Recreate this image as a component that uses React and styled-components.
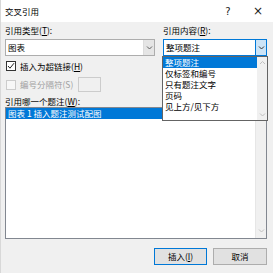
import React from "react";
import styled, { createGlobalStyle } from "styled-components";

const Global = createGlobalStyle`
  html, body { margin: 0; padding: 0; background: #f0f0f0; }
  body { font-family: "Noto Sans CJK SC", "Noto Sans", sans-serif; font-size: 8.5px; color: #000; }
`;

const Dialog = styled.div`
  width: 273px;
  height: 273px;
  background: #f0f0f0;
  display: flex;
  flex-direction: column;
  box-sizing: border-box;
  border-left: 1px solid #d8d8d8;
  overflow: hidden;
`;

const TitleBar = styled.div`
  height: 22px;
  background: #fff;
  display: flex;
  align-items: center;
  padding-left: 4px;
  line-height: 11px;
`;

const TitleText = styled.span`
  flex: 1;
`;

const TitleButton = styled.span`
  width: ${(p) => p.$w}px;
  text-align: center;
  font-family: "DejaVu Sans", sans-serif;
  font-size: ${(p) => p.$size}px;
  color: #222;
`;

const Body = styled.div`
  flex: 1;
  display: flex;
  flex-direction: column;
  padding: 3px 6px 0 4px;
`;

const TopRow = styled.div`
  display: grid;
  grid-template-columns: 150px 104px;
  column-gap: 8px;
`;

const Field = styled.div`
  position: relative;
  display: flex;
  flex-direction: column;
`;

const Label = styled.div`
  height: 11px;
  line-height: 11px;
  white-space: nowrap;
  width: ${(p) => (p.$w ? `${p.$w}px` : "auto")};
  color: ${(p) => (p.$disabled ? "#a0a0a0" : "#000")};
`;

const U = styled.span`
  text-decoration: underline;
`;

const Combo = styled.div`
  margin-top: 3px;
  height: 17px;
  box-sizing: border-box;
  border: 1px solid ${(p) => (p.$focus ? "#0078d7" : "#adadad")};
  background: #fff;
  display: flex;
  align-items: stretch;
`;

const ComboValue = styled.div`
  flex: 1;
  line-height: 15px;
  padding-left: 2px;
  white-space: nowrap;
`;

const ComboButton = styled.div`
  width: 10px;
  display: flex;
  align-items: center;
  justify-content: center;
  background: ${(p) => (p.$focus ? "#cce4f7" : "#e5e5e5")};
  border-left: 1px solid ${(p) => (p.$focus ? "#0078d7" : "#dcdcdc")};
`;

const Chevron = ({ color = "#606060", up }) => (
  <svg width="7" height="5" viewBox="0 0 7 5">
    <path
      d={up ? "M1 4 L3.5 1.5 L6 4" : "M1 1.5 L3.5 4 L6 1.5"}
      fill="none"
      stroke={color}
      strokeWidth="1"
    />
  </svg>
);

const DropList = styled.div`
  position: absolute;
  top: 100%;
  left: -1px;
  width: 106px;
  height: 65px;
  box-sizing: border-box;
  border: 1px solid #646464;
  background: #fff;
  display: flex;
  z-index: 5;
`;

const Items = styled.div`
  flex: 1;
  display: flex;
  flex-direction: column;
`;

const Item = styled.div`
  height: 11px;
  line-height: 11px;
  padding-left: 2px;
  white-space: nowrap;
  overflow: hidden;
  background: ${(p) => (p.$sel ? "#0078d7" : "transparent")};
  color: ${(p) => (p.$sel ? "#fff" : "#000")};
`;

const ScrollBar = styled.div`
  width: 10px;
  background: #f0f0f0;
  display: flex;
  flex-direction: column;
  justify-content: space-between;
  align-items: center;
  padding: 3px 0;
`;

const CheckRow = styled.div`
  margin-top: ${(p) => p.$mt}px;
  height: ${(p) => p.$h}px;
  display: flex;
  align-items: center;
`;

const Box = styled.div`
  width: 10px;
  height: 10px;
  box-sizing: border-box;
  border: 1px solid ${(p) => (p.$disabled ? "#cccccc" : "#333")};
  background: ${(p) => (p.$disabled ? "#f7f7f7" : "#fff")};
  display: flex;
  align-items: center;
  justify-content: center;
  margin-right: 4px;
  margin-left: 1px;
`;

const SmallInput = styled.div`
  width: 23px;
  height: 15px;
  box-sizing: border-box;
  border: 1px solid #cccccc;
  background: #f0f0f0;
`;

const BigList = styled.div`
  height: 132px;
  box-sizing: border-box;
  border: 1px solid #828790;
  background: #fff;
  display: flex;
`;

const BigItems = styled.div`
  flex: 1;
`;

const BigScroll = styled(ScrollBar)`
  justify-content: flex-end;
  border-left: 1px solid #e6e6e6;
  padding-bottom: 5px;
`;

const Buttons = styled.div`
  margin-top: 9px;
  display: flex;
  justify-content: flex-end;
  gap: 6px;
`;

const Button = styled.div`
  width: ${(p) => p.$w}px;
  height: 17px;
  box-sizing: border-box;
  border: 1px solid ${(p) => (p.$default ? "#0078d7" : "#adadad")};
  background: #e1e1e1;
  display: flex;
  align-items: center;
  justify-content: center;
  line-height: 11px;
`;

export default function App() {
  return (
    <>
      <Global />
      <Dialog>
        <TitleBar>
          <TitleText>交叉引用</TitleText>
          <TitleButton $w={30} $size={10}>?</TitleButton>
          <TitleButton $w={30} $size={12}>×</TitleButton>
        </TitleBar>
        <Body>
          <TopRow>
            <Field>
              <Label>
                引用类型(<U>T</U>):
              </Label>
              <Combo>
                <ComboValue>图表</ComboValue>
                <ComboButton>
                  <Chevron />
                </ComboButton>
              </Combo>
            </Field>
            <Field>
              <Label>
                引用内容(<U>R</U>):
              </Label>
              <Combo $focus>
                <ComboValue>整项题注</ComboValue>
                <ComboButton $focus>
                  <Chevron color="#333" />
                </ComboButton>
              </Combo>
              <DropList>
                <Items>
                  <Item $sel>整项题注</Item>
                  <Item>仅标签和编号</Item>
                  <Item>只有题注文字</Item>
                  <Item>页码</Item>
                  <Item>见上方/见下方</Item>
                </Items>
                <ScrollBar>
                  <Chevron color="#c0c0c0" up />
                  <Chevron color="#c0c0c0" />
                </ScrollBar>
              </DropList>
            </Field>
          </TopRow>
          <CheckRow $mt={5} $h={10}>
            <Box>
              <svg width="8" height="8" viewBox="0 0 8 8">
                <path d="M1 4 L3 6.2 L7 1.2" fill="none" stroke="#222" strokeWidth="1" />
              </svg>
            </Box>
            <Label>
              插入为超链接(<U>H</U>)
            </Label>
          </CheckRow>
          <CheckRow $mt={6} $h={15}>
            <Box $disabled />
            <Label $disabled $w={58}>编号分隔符(S)</Label>
            <SmallInput />
          </CheckRow>
          <CheckRow $mt={4} $h={11}>
            <Label>
              引用哪一个题注(<U>W</U>):
            </Label>
          </CheckRow>
          <BigList>
            <BigItems>
              <Item $sel>图表 1 插入题注测试配图</Item>
            </BigItems>
            <BigScroll>
              <Chevron color="#c0c0c0" />
            </BigScroll>
          </BigList>
          <Buttons>
            <Button $w={53} $default>
              插入(<U>I</U>)
            </Button>
            <Button $w={54}>取消</Button>
          </Buttons>
        </Body>
      </Dialog>
    </>
  );
}
